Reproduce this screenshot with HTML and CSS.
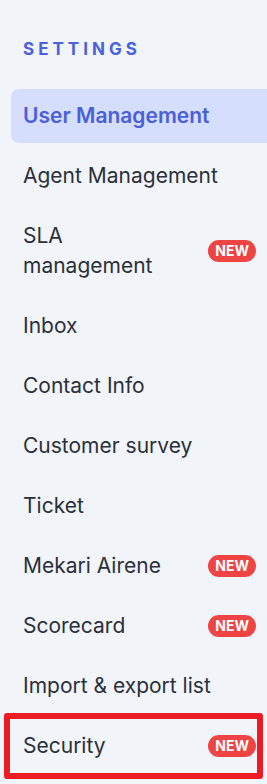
FILE: index.html
```html
<!DOCTYPE html>
<html>
<head>
<meta charset="utf-8">
<link rel="stylesheet" href="styles.css">
</head>
<body>
<nav class="sidebar">
  <div class="title">SETTINGS</div>
  <ul class="menu">
    <li class="item active"><span class="label">User Management</span></li>
    <li class="item"><span class="label">Agent Management</span></li>
    <li class="item"><span class="label">SLA<br>management</span><span class="badge">NEW</span></li>
    <li class="item"><span class="label">Inbox</span></li>
    <li class="item"><span class="label">Contact Info</span></li>
    <li class="item"><span class="label">Customer survey</span></li>
    <li class="item"><span class="label">Ticket</span></li>
    <li class="item"><span class="label">Mekari Airene</span><span class="badge">NEW</span></li>
    <li class="item"><span class="label">Scorecard</span><span class="badge">NEW</span></li>
    <li class="item"><span class="label">Import &amp; export list</span></li>
    <li class="item highlighted"><span class="label">Security</span><span class="badge">NEW</span></li>
  </ul>
</nav>
</body>
</html>
```

FILE: styles.css
```css
html, body {
  margin: 0;
  padding: 0;
  background: #f1f4f9;
}
body {
  font-family: Inter, "Noto Sans", sans-serif;
  color: #2b303a;
  min-height: 784px;
}
.sidebar {
  padding: 39px 0 0 11px;
}
.title {
  padding-left: 12px;
  font-size: 17px;
  line-height: 20px;
  font-weight: 700;
  letter-spacing: 4px;
  color: #4a60dc;
}
.menu {
  list-style: none;
  margin: 30px 0 0 0;
  padding: 0;
  display: flex;
  flex-direction: column;
  gap: 6px;
}
.item {
  position: relative;
  display: flex;
  align-items: center;
  justify-content: space-between;
  padding: 12px 11px 12px 12px;
  font-size: 21px;
  line-height: 30px;
  border-radius: 8px 0 0 8px;
}
.item.active {
  background: #d6defd;
  color: #4a5fd8;
  font-weight: 600;
}
.badge {
  background: #ef4444;
  color: #ffffff;
  font-size: 14px;
  font-weight: 700;
  line-height: 22px;
  height: 22px;
  padding: 0 7px;
  border-radius: 11px;
}
.highlighted::after {
  content: "";
  position: absolute;
  left: -7px;
  right: 4px;
  top: -6px;
  bottom: -6px;
  border: 6px solid #ed1c24;
  border-radius: 3px;
}
```
